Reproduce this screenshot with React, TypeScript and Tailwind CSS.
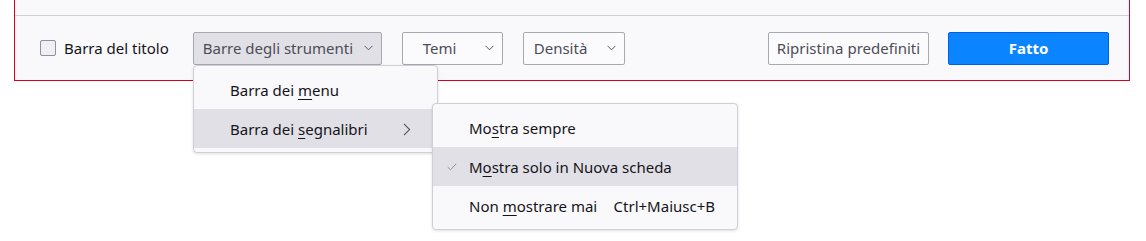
import { useState } from "react";

const Chevron = ({ className = "" }: { className?: string }) => (
  <svg width="9" height="6" viewBox="0 0 9 6" className={className}>
    <path d="M0.5 0.8 L4.5 4.8 L8.5 0.8" fill="none" stroke="#5b5b66" strokeWidth="1" />
  </svg>
);

const ChevronRight = () => (
  <svg width="8" height="13" viewBox="0 0 8 13">
    <path d="M1 0.8 L6.6 6.5 L1 12.2" fill="none" stroke="#5b5b66" strokeWidth="1.2" />
  </svg>
);

const Check = () => (
  <svg width="10" height="8" viewBox="0 0 10 8">
    <path d="M0.8 4.2 L3.5 6.8 L9.2 0.8" fill="none" stroke="#8f8f9d" strokeWidth="1" />
  </svg>
);

export default function App() {
  const [titleBar, setTitleBar] = useState(false);

  return (
    <div className="relative h-[241px] w-[1146px] overflow-hidden bg-white text-[15px] text-[#15141a] [font-family:'Noto_Sans',sans-serif]">
      <div className="ml-[14px] w-[1116px] border-x border-b border-[#d70022] bg-[#f9f9fb]">
        <div className="h-[15px]" />
        <div className="h-px bg-[#cfcfd8]" />
        <div className="flex h-[64px] items-center">
          <label className="ml-[25px] flex cursor-pointer items-center gap-[8px]">
            <span
              onClick={() => setTitleBar(!titleBar)}
              className="h-[16px] w-[16px] rounded-[2px] border border-[#8f8f9d] bg-[#f0f0f4]"
            />
            <span>Barra del titolo</span>
          </label>

          <button className="ml-[24px] flex h-[33px] w-[189px] items-center justify-between rounded-[2px] border border-[#a8a8b0] bg-[#e0e0e6] pl-[9px] pr-[8px] text-[#4d4d57]">
            <span>Barre degli strumenti</span>
            <Chevron />
          </button>
          <button className="ml-[20px] flex h-[33px] w-[101px] items-center justify-between rounded-[2px] border border-[#a8a8b0] bg-[#fbfbfe] pl-[20px] pr-[8px] text-[#4d4d57]">
            <span>Temi</span>
            <Chevron />
          </button>
          <button className="ml-[20px] flex h-[33px] w-[102px] items-center justify-between rounded-[2px] border border-[#a8a8b0] bg-[#fbfbfe] pl-[10px] pr-[8px] text-[#4d4d57]">
            <span>Densità</span>
            <Chevron />
          </button>

          <button className="ml-auto flex h-[33px] w-[161px] items-center justify-center rounded-[2px] border border-[#a8a8b0] bg-[#fbfbfe] text-[#4d4d57]">
            Ripristina predefiniti
          </button>
          <button className="ml-[19px] mr-[20px] flex h-[33px] w-[161px] items-center justify-center rounded-[2px] border border-[#0060df] bg-[#0a84ff] font-bold text-white">
            Fatto
          </button>
        </div>
      </div>

      {/* Toolbars menu */}
      <div className="absolute left-[193px] top-[65px] w-[245px] rounded-[4px] border border-[#cfcfd8] bg-[#f9f9fb] py-[4px] shadow-[0_1px_3px_rgba(0,0,0,0.12)]">
        <div className="flex h-[39px] items-center pl-[36px] pt-[2px]">
          <span>
            Barra dei <u className="underline-offset-[3px]">m</u>enu
          </span>
        </div>
        <div className="flex h-[39px] items-center justify-between bg-[#e0e0e6] pl-[36px] pr-[26px] pt-[1px]">
          <span>
            Barra dei <u className="underline-offset-[3px]">s</u>egnalibri
          </span>
          <ChevronRight />
        </div>
      </div>

      {/* Bookmarks toolbar submenu */}
      <div className="absolute left-[432px] top-[103px] w-[306px] rounded-[4px] border border-[#cfcfd8] bg-[#f9f9fb] py-[4px] shadow-[0_1px_3px_rgba(0,0,0,0.12)]">
        <div className="flex h-[39px] items-center pl-[36px] pt-[1px]">
          <span>
            Mo<u className="underline-offset-[3px]">s</u>tra sempre
          </span>
        </div>
        <div className="relative flex h-[39px] items-center bg-[#e0e0e6] pl-[36px] pt-[1px]">
          <span className="absolute left-[14px] top-[16px]">
            <Check />
          </span>
          <span>
            M<u className="underline-offset-[3px]">o</u>stra solo in Nuova scheda
          </span>
        </div>
        <div className="flex h-[39px] items-center justify-between pl-[36px] pr-[22px] pt-[1px]">
          <span>
            Non <u className="underline-offset-[3px]">m</u>ostrare mai
          </span>
          <span>Ctrl+Maiusc+B</span>
        </div>
      </div>
    </div>
  );
}
